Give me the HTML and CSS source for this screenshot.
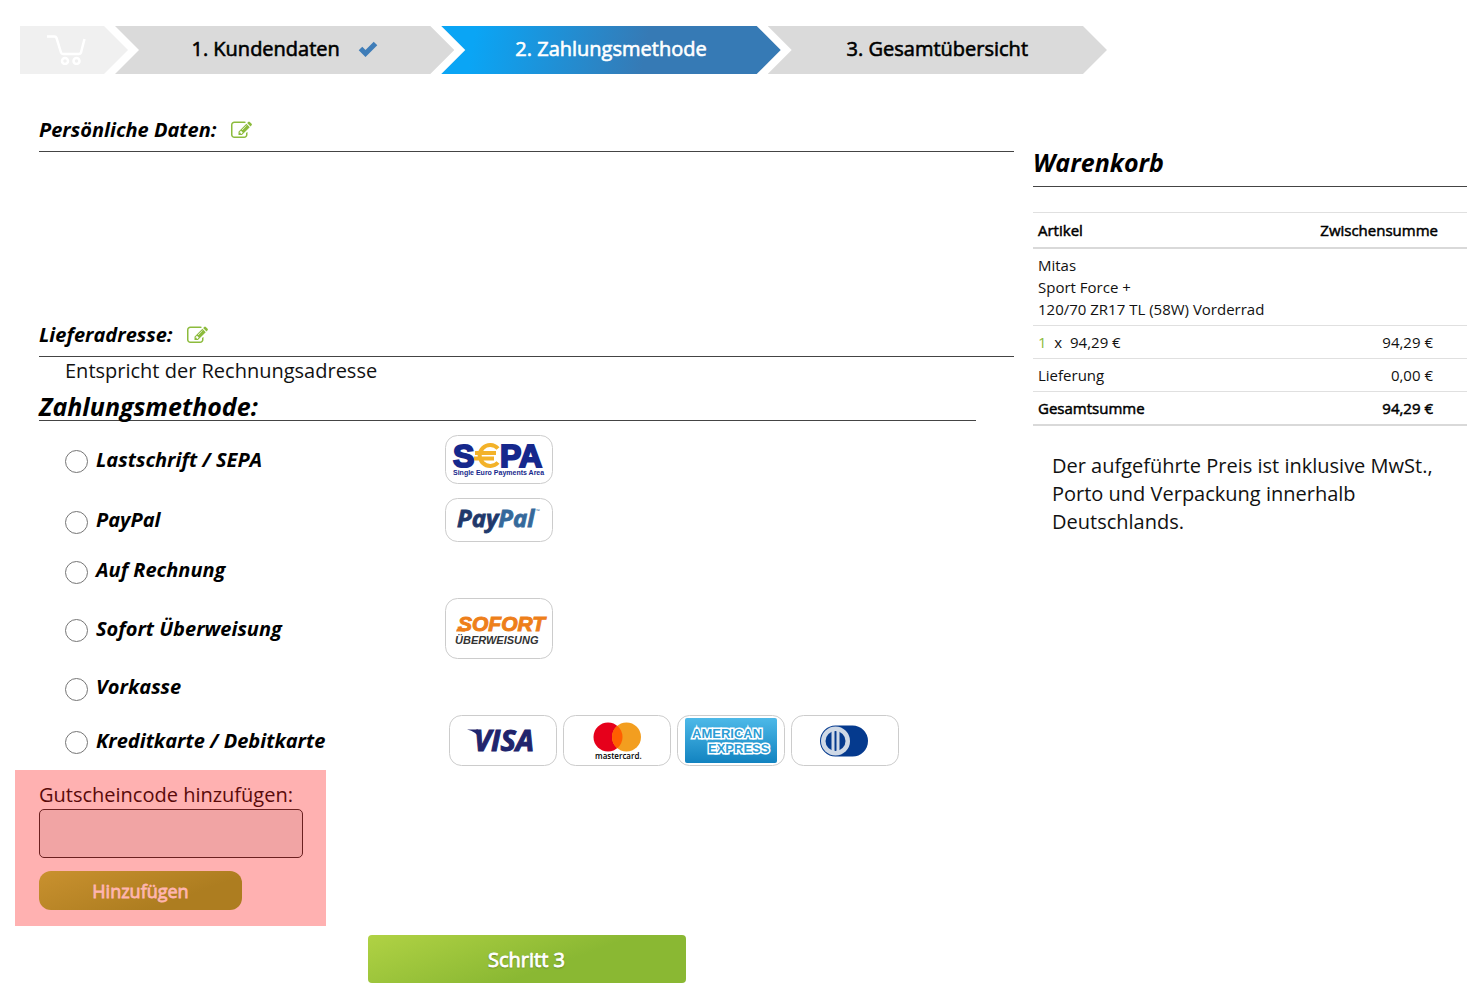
FILE: index.html
```html
<!DOCTYPE html>
<html lang="de">
<head>
  <meta charset="UTF-8">
  <meta name="viewport" content="width=device-width, initial-scale=1">
  <title>Zahlungsmethode</title>
  <link rel="stylesheet" href="styles.css">
</head>
<body>
  <!-- icons used more than once -->
  <svg class="sprite" width="0" height="0" aria-hidden="true">
    <symbol id="icon-edit" viewBox="0 0 1792 1792">
      <path d="M888 1184l116-116-152-152-116 116v56h96v96h56zm440-720q-16-16-33 1l-350 350q-17 17-1 33t33-1l350-350q17-17 1-33zm80 594v190q0 119-84.500 203.500t-203.500 84.500h-832q-119 0-203.500-84.500t-84.500-203.500v-832q0-119 84.500-203.500t203.500-84.500h832q63 0 117 25 15 7 18 23 3 17-9 29l-49 49q-14 14-32 8-23-6-45-6h-832q-66 0-113 47t-47 113v832q0 66 47 113t113 47h832q66 0 113-47t47-113v-126q0-13 9-22l64-64q15-15 35-7t20 29zm-96-738l288 288-672 672h-288v-288zm444 132l-92 92-288-288 92-92q28-28 68-28t68 28l152 152q28 28 28 68t-28 68z"/>
    </symbol>
  </svg>

  <ol class="steps">
    <li class="step step-cart">
      <a href="#" aria-label="Warenkorb">
        <svg class="cart-icon" viewBox="0 0 40 30" aria-hidden="true">
          <path d="M1 1.500h7.500q1.500 0 2 1.500l4.500 14.500q.5 1.500 2 1.500h16q1.500 0 2-1.500L38.500 4"/>
          <circle cx="19" cy="26" r="3"/>
          <circle cx="30.500" cy="26" r="3"/>
        </svg>
      </a>
    </li>
    <li class="step">
      <a href="#">1. Kundendaten
        <svg class="check-icon" viewBox="0 0 20 16" aria-hidden="true">
          <path d="M2.500 7.500L7.500 12.500L17.500 2.500"/>
        </svg>
      </a>
    </li>
    <li class="step step-active"><a href="#" aria-current="step">2. Zahlungsmethode</a></li>
    <li class="step"><a href="#">3. Gesamtübersicht</a></li>
  </ol>

  <div class="checkout">
    <main class="main">
      <section class="personal">
        <h3 class="title">Persönliche Daten:
          <a href="#" aria-label="Persönliche Daten bearbeiten"><svg class="edit-icon"><use href="#icon-edit"/></svg></a>
        </h3>
      </section>

      <section class="delivery">
        <h3 class="title">Lieferadresse:
          <a href="#" aria-label="Lieferadresse bearbeiten"><svg class="edit-icon"><use href="#icon-edit"/></svg></a>
        </h3>
        <p>Entspricht der Rechnungsadresse</p>
      </section>

      <form>
        <h2 class="payment-title">Zahlungsmethode:</h2>
        <div class="methods">
          <div class="method">
            <label><input type="radio" name="payment" value="sepa"><span>Lastschrift / SEPA</span></label>
            <div class="logos">
              <svg class="logo" width="108" height="49" viewBox="0 0 108 49" role="img" aria-label="SEPA">
                <rect class="frame" x=".5" y=".5" width="107" height="48" rx="12"/>
                <g class="sepa">
                  <text x="8" y="32">S</text>
                  <text x="55" y="32">PA</text>
                </g>
                <path class="euro" d="M53 13.500A10.500 10.500 0 1 0 53 27.500M30 18h21M29 23.500h20"/>
                <text class="sepa-sub" x="8" y="40">Single Euro Payments Area</text>
              </svg>
            </div>
          </div>
          <div class="method">
            <label><input type="radio" name="payment" value="paypal"><span>PayPal</span></label>
            <div class="logos">
              <svg class="logo" width="108" height="44" viewBox="0 0 108 44" role="img" aria-label="PayPal">
                <rect class="frame" x=".5" y=".5" width="107" height="43" rx="12"/>
                <text class="paypal" x="12" y="29"><tspan class="pay">Pay</tspan><tspan class="pal">Pal</tspan></text>
                <text class="tm" x="91" y="15">™</text>
              </svg>
            </div>
          </div>
          <div class="method">
            <label><input type="radio" name="payment" value="rechnung"><span>Auf Rechnung</span></label>
          </div>
          <div class="method">
            <label><input type="radio" name="payment" value="sofort"><span>Sofort Überweisung</span></label>
            <div class="logos">
              <svg class="logo" width="108" height="61" viewBox="0 0 108 61" role="img" aria-label="Sofort Überweisung">
                <rect class="frame" x=".5" y=".5" width="107" height="60" rx="12"/>
                <text class="sofort" x="13" y="33">SOFORT</text>
                <path class="sofort-bar" d="M11 33.500l1-3h8v3z"/>
                <text class="sofort-sub" x="10" y="46">ÜBERWEISUNG</text>
              </svg>
            </div>
          </div>
          <div class="method">
            <label><input type="radio" name="payment" value="vorkasse"><span>Vorkasse</span></label>
          </div>
          <div class="method method-cards">
            <label><input type="radio" name="payment" value="karte"><span>Kreditkarte / Debitkarte</span></label>
            <div class="logos">
              <svg class="logo" width="108" height="51" viewBox="0 0 108 51" role="img" aria-label="Visa">
                <rect class="frame" x=".5" y=".5" width="107" height="50" rx="12"/>
                <path class="visa-wing" d="M18 14.500h11l2 9q-4-7-13-9z"/>
                <text class="visa" x="25" y="36">VISA</text>
              </svg>
              <svg class="logo" width="108" height="51" viewBox="0 0 108 51" role="img" aria-label="Mastercard">
                <rect class="frame" x=".5" y=".5" width="107" height="50" rx="12"/>
                <circle cx="45" cy="22" r="14.500" fill="#e6001b"/>
                <circle cx="63.500" cy="22" r="14.500" fill="#f39e1f"/>
                <path d="M54.250 10.800a14.500 14.500 0 0 1 0 22.400a14.500 14.500 0 0 1 0-22.400z" fill="#ff5f00"/>
                <text class="mastercard" x="32" y="44">mastercard.</text>
              </svg>
              <svg class="logo" width="108" height="51" viewBox="0 0 108 51" role="img" aria-label="American Express">
                <defs>
                  <linearGradient id="amex" x2="0" y2="1">
                    <stop offset="0" stop-color="#4db9e8"/>
                    <stop offset="1" stop-color="#1283c0"/>
                  </linearGradient>
                </defs>
                <rect class="frame" x=".5" y=".5" width="107" height="50" rx="12"/>
                <rect x="8" y="3" width="92" height="45" rx="2" fill="url(#amex)"/>
                <text class="amex" x="15" y="23">AMERICAN</text>
                <text class="amex" x="31" y="38">EXPRESS</text>
              </svg>
              <svg class="logo" width="108" height="51" viewBox="0 0 108 51" role="img" aria-label="Diners Club">
                <rect class="frame" x=".5" y=".5" width="107" height="50" rx="12"/>
                <rect x="29" y="10.500" width="48" height="31" rx="15.500" fill="#053a8e"/>
                <circle cx="44.500" cy="26" r="14.500" fill="#cfd9e6"/>
                <circle cx="44.500" cy="26" r="10" fill="#053a8e"/>
                <path d="M42 15v22M47 15v22" stroke="#cfd9e6" stroke-width="3"/>
              </svg>
            </div>
          </div>
        </div>

        <div class="voucher">
          <label for="voucher">Gutscheincode hinzufügen:</label>
          <input type="text" id="voucher" name="voucher">
          <button type="button">Hinzufügen</button>
        </div>

        <button type="submit" class="next">Schritt 3</button>
      </form>
    </main>

    <aside class="basket">
      <h2>Warenkorb</h2>
      <table>
        <thead>
          <tr><th>Artikel</th><th class="price">Zwischensumme</th></tr>
        </thead>
        <tbody>
          <tr class="article">
            <td colspan="2">Mitas<br>Sport Force +<br>120/70 ZR17 TL (58W) Vorderrad</td>
          </tr>
          <tr><td><span class="count">1</span>&nbsp; x &nbsp;94,29 €</td><td class="price">94,29 €</td></tr>
          <tr><td>Lieferung</td><td class="price">0,00 €</td></tr>
        </tbody>
        <tfoot>
          <tr><td>Gesamtsumme</td><td class="price">94,29 €</td></tr>
        </tfoot>
      </table>
      <p>Der aufgeführte Preis ist inklusive MwSt., Porto und Verpackung innerhalb Deutschlands.</p>
    </aside>
  </div>
</body>
</html>
```
FILE: styles.css
```css
*{
  box-sizing: border-box;
  margin: 0;
  padding: 0;
}
body{
  padding: 26px 13px 10px 20px;
  background-color: #fff;
  color: #111;
  font: 20px/28px "Open Sans", sans-serif;
}
a{
  color: inherit;
  text-decoration: none;
}
.sprite{
  position: absolute;
}

/* steps */
.steps{
  display: flex;
  max-width: 1087px;
  list-style: none;
}
.step{
  flex: 1;
  margin-left: -13px;
  background-color: #dadada;
  color: #000;
  clip-path: polygon(0 0, calc(100% - 24px) 0, 100% 50%, calc(100% - 24px) 100%, 0 100%, 24px 50%);
}
.step a{
  display: flex;
  align-items: center;
  justify-content: center;
  gap: 18px;
  height: 48px;
  padding-bottom: 3px;
  -webkit-text-stroke: 0.6px;
}
.step-cart{
  flex: 0 0 108px;
  margin-left: 0;
  background-color: #f0f0f0;
  clip-path: polygon(0 0, calc(100% - 24px) 0, 100% 50%, calc(100% - 24px) 100%, 0 100%);
}
.step-cart a{
  padding: 0 17px 0 0;
}
.step-active{
  background-image: linear-gradient(100deg, #0aa5f5 10%, #367ab5 60%);
  color: #fff;
}
.cart-icon{
  width: 40px;
  height: 30px;
  fill: none;
  stroke: #fff;
  stroke-width: 2.5;
}
.check-icon{
  width: 20px;
  height: 16px;
  fill: none;
  stroke: #3f7db8;
  stroke-width: 5;
}

/* columns */
.checkout{
  display: grid;
  grid-template-columns: 975fr 434fr;
  gap: 19px;
  padding-left: 19px;
}
.main{
  padding-top: 42px;
}
.title{
  display: flex;
  align-items: center;
  gap: 14px;
  height: 36px;
  padding-bottom: 7px;
  border-bottom: 1px solid #444;
  color: #000;
  font-size: 20px;
  font-style: italic;
}
.title a{
  display: flex;
}
.edit-icon{
  width: 21px;
  height: 21px;
  fill: #8cbb3c;
}
.personal{
  height: 205px;
}
.delivery p{
  padding-left: 26px;
}
.payment-title{
  height: 36px;
  margin-right: 38px;
  padding-top: 7px;
  border-bottom: 1px solid #444;
  color: #000;
  font-size: 25px;
  font-style: italic;
}

/* payment methods */
.methods{
  padding: 7px 0 0 26px;
}
.method{
  display: grid;
  grid-template-columns: 380px 1fr;
  align-items: center;
  min-height: 42px;
  padding: 7px 0;
}
.method-cards{
  grid-template-columns: 384px 1fr;
}
.method label{
  display: flex;
  align-items: center;
  gap: 8px;
  color: #000;
  font-weight: bold;
  font-style: italic;
}
.method input{
  width: 23px;
  height: 23px;
  margin-top: 4px;
  appearance: none;
  border: 1px solid #767676;
  border-radius: 50%;
  background-color: #fff;
}
.method input:checked{
  border: 7px solid #367ab5;
}
.logos{
  display: flex;
  flex-wrap: wrap;
  gap: 6px;
}
.logo{
  display: block;
}
.frame{
  fill: #fff;
  stroke: #ccc;
}
.sepa{
  fill: #16288c;
  stroke: #16288c;
  stroke-width: 2;
  font: bold 32px "Liberation Sans", sans-serif;
}
.euro{
  fill: none;
  stroke: #f3b229;
  stroke-width: 4;
}
.sepa-sub{
  fill: #16288c;
  font: bold 7px "Liberation Sans", sans-serif;
}
.paypal{
  stroke-width: 0.8;
  font: italic bold 24px "Open Sans", sans-serif;
}
.pay{
  fill: #20386b;
  stroke: #20386b;
}
.pal{
  fill: #35699b;
  stroke: #35699b;
}
.tm{
  fill: #35699b;
  font: 5px "Open Sans", sans-serif;
}
.sofort{
  fill: #ee7f1a;
  stroke: #ee7f1a;
  font: italic bold 21px "Liberation Sans", sans-serif;
}
.sofort-bar{
  fill: #ee7f1a;
}
.sofort-sub{
  fill: #333;
  font: italic bold 11px "Liberation Sans", sans-serif;
}
.visa{
  fill: #20246c;
  stroke: #20246c;
  font: italic bold 29px "Open Sans", sans-serif;
}
.visa-wing{
  fill: #20246c;
}
.mastercard{
  fill: #000;
  font: 600 8px "Open Sans", sans-serif;
}
.amex{
  fill: #2c9dd5;
  stroke: #fff;
  stroke-width: 3;
  paint-order: stroke;
  font: bold 13px "Liberation Sans", sans-serif;
}

/* voucher */
.voucher{
  display: flex;
  flex-direction: column;
  align-items: flex-start;
  width: 311px;
  margin: -3px 0 9px -24px;
  padding: 11px 23px 16px 24px;
  background-color: #ffb1b1;
  color: #590a0a;
}
.voucher input{
  width: 100%;
  height: 49px;
  padding: 0 12px;
  border: 1px solid #6b2020;
  border-radius: 5px;
  background-color: #f1a4a4;
  color: inherit;
  font: inherit;
}
.voucher button{
  width: 203px;
  height: 39px;
  margin-top: 13px;
  border: 0;
  border-radius: 12px;
  background-image: linear-gradient(160deg, #c9912f, #ad7d20 70%);
  color: #ffb5b0;
  font: 18px "Open Sans", sans-serif;
  -webkit-text-stroke: 0.8px;
}
.next{
  display: block;
  width: 318px;
  height: 48px;
  margin: 0 auto;
  border: 0;
  border-radius: 4px;
  background-image: linear-gradient(160deg, #b0d244, #8ab833 60%);
  color: #fff;
  font: 20px "Open Sans", sans-serif;
  text-shadow: 0 1px 2px rgba(0, 0, 0, 0.4);
  -webkit-text-stroke: 0.8px;
}

/* basket */
.basket{
  padding-top: 68px;
}
.basket h2{
  height: 45px;
  padding-top: 6px;
  margin-bottom: 25px;
  border-bottom: 1px solid #444;
  color: #000;
  font-size: 25px;
  font-style: italic;
}
.basket table{
  width: 100%;
  border-collapse: collapse;
  border-top: 1px solid #e4e4e4;
  border-bottom: 2px solid #d9d9d9;
  font-size: 15px;
  line-height: 22px;
}
.basket th,
.basket td{
  padding: 5px;
  border-top: 1px solid #e0e0e0;
  text-align: left;
}
.basket th{
  padding: 6px 5px;
  border-bottom: 2px solid #d9d9d9;
}
.basket th,
.basket tfoot td{
  color: #000;
  font-weight: normal;
  -webkit-text-stroke: 0.5px;
}
.basket .article td{
  padding: 5px;
}
.basket .price{
  padding-right: 34px;
  text-align: right;
}
.basket th.price{
  padding-right: 29px;
}
.count{
  color: #8cbb3c;
}
.basket p{
  padding: 26px 19px 0;
}
```
